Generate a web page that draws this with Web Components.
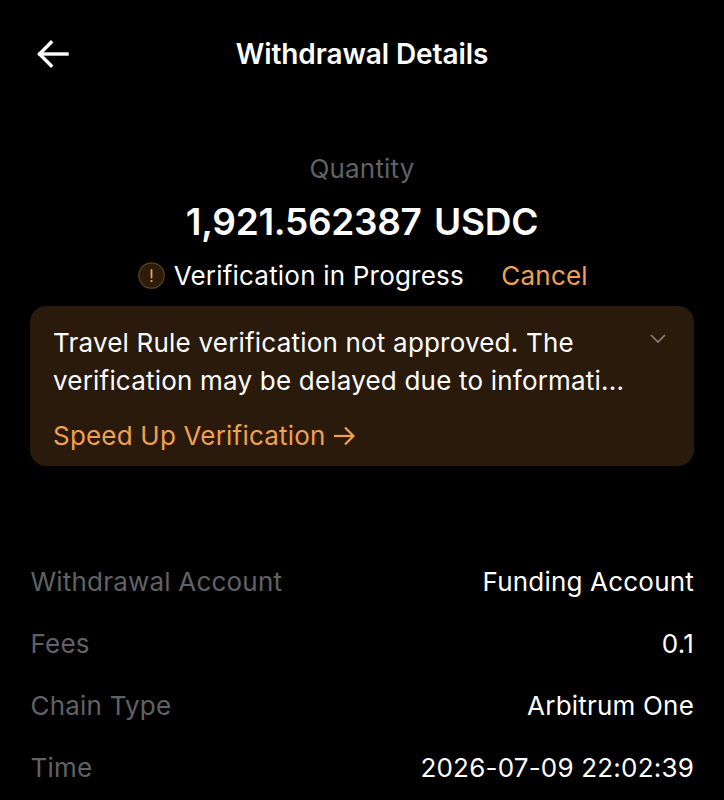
<!DOCTYPE html>
<html>
<head>
<meta charset="utf-8">
<style>
  html, body { margin: 0; padding: 0; background: #000; }
  body { width: 724px; height: 800px; overflow: hidden; font-family: Inter, "Liberation Sans", sans-serif; color: #fff; }
</style>
</head>
<body>
<withdrawal-page>
  <nav-bar title="Withdrawal Details"></nav-bar>
  <quantity-head label="Quantity" amount="1,921.562387 USDC" status="Verification in Progress" action="Cancel"></quantity-head>
  <notice-card link="Speed Up Verification">Travel Rule verification not approved. The<br>verification may be delayed due to informati...</notice-card>
  <detail-list>
    <detail-row label="Withdrawal Account" value="Funding Account"></detail-row>
    <detail-row label="Fees" value="0.1"></detail-row>
    <detail-row label="Chain Type" value="Arbitrum One"></detail-row>
    <detail-row label="Time" value="2026-07-09 22:02:39"></detail-row>
  </detail-list>
</withdrawal-page>

<script>
class WithdrawalPage extends HTMLElement {
  constructor() {
    super();
    this.attachShadow({ mode: "open" });
    this.shadowRoot.innerHTML = `
      <style>
        :host { display: flex; flex-direction: column; width: 724px; height: 800px; }
      </style>
      <slot></slot>`;
  }
}

class NavBar extends HTMLElement {
  constructor() {
    super();
    this.attachShadow({ mode: "open" });
    this.shadowRoot.innerHTML = `
      <style>
        :host { display: grid; grid-template-columns: 120px 1fr 120px; align-items: center; height: 38px; margin-top: 35px; }
        svg { display: block; margin-left: 36px; }
        h1 { margin: 0; font-size: 28px; font-weight: 600; line-height: 38px; text-align: center; letter-spacing: -0.1px; }
      </style>
      <svg width="34" height="30" viewBox="0 0 34 30" fill="none" stroke="#fff" stroke-width="3.4" stroke-linecap="square" stroke-linejoin="miter">
        <path d="M31 15H4"/><path d="M15 3.5 3.5 15 15 26.5"/>
      </svg>
      <h1></h1>`;
  }
  connectedCallback() {
    this.shadowRoot.querySelector('h1').textContent = this.getAttribute('title');
  }
}

class QuantityHead extends HTMLElement {
  constructor() {
    super();
    this.attachShadow({ mode: "open" });
    this.shadowRoot.innerHTML = `
      <style>
        :host { display: flex; flex-direction: column; align-items: center; margin-top: 77px; }
        .label { font-size: 26px; line-height: 38px; letter-spacing: 0.2px; color: #606266; }
        .amount { font-size: 37px; font-weight: 600; line-height: 44px; margin-top: 12px; letter-spacing: -0.3px; word-spacing: 3.4px; }
        .status { display: flex; align-items: center; margin-top: 11px; height: 40px; padding-left: 2px; font-size: 26px; letter-spacing: 0.2px; }
        .status svg { display: block; margin-right: 8.5px; }
        .cancel { color: #f0a050; margin-left: 37.5px; }
      </style>
      <div class="label"></div>
      <div class="amount"></div>
      <div class="status">
        <svg width="27" height="27" viewBox="0 0 27 27">
          <circle cx="13.5" cy="13.5" r="12.7" fill="#2e1c0b" stroke="#5e3f20" stroke-width="1.2"/>
          <path d="M13.5 8v7.5" stroke="#f0a050" stroke-width="1.8" stroke-linecap="round"/>
          <circle cx="13.5" cy="19" r="1.1" fill="#f0a050"/>
        </svg>
        <span class="text"></span>
        <span class="cancel"></span>
      </div>`;
  }
  connectedCallback() {
    const root = this.shadowRoot;
    root.querySelector('.label').textContent = this.getAttribute('label');
    root.querySelector('.amount').textContent = this.getAttribute('amount');
    root.querySelector('.text').textContent = this.getAttribute('status');
    root.querySelector('.cancel').textContent = this.getAttribute('action');
  }
}

class NoticeCard extends HTMLElement {
  constructor() {
    super();
    this.attachShadow({ mode: "open" });
    this.shadowRoot.innerHTML = `
      <style>
        :host { display: block; position: relative; box-sizing: border-box; margin: 11px 30px 0; height: 160px; padding: 18px 23px 0; background: #291a0b; border-radius: 16px; font-size: 26px; line-height: 37.5px; letter-spacing: 0.2px; color: #fff; }
        .chev { position: absolute; top: 27px; right: 27px; display: block; }
        .link { display: flex; align-items: center; margin-top: 18px; color: #f0a050; }
        .link svg { display: block; margin-left: 7px; }
      </style>
      <svg class="chev" width="18" height="12" viewBox="0 0 18 12" fill="none" stroke="#8a8178" stroke-width="1.6"><path d="M2 2l7 7 7-7"/></svg>
      <div><slot></slot></div>
      <div class="link"><span class="link-text"></span>
        <svg width="22" height="22" viewBox="0 0 22 22" fill="none" stroke="#f0a050" stroke-width="2.2"><path d="M1 11H20"/><path d="M12 2.5 20.5 11 12 19.5"/></svg>
      </div>`;
  }
  connectedCallback() {
    this.shadowRoot.querySelector('.link-text').textContent = this.getAttribute('link');
  }
}

class DetailList extends HTMLElement {
  constructor() {
    super();
    this.attachShadow({ mode: "open" });
    this.shadowRoot.innerHTML = `
      <style>
        :host { display: flex; flex-direction: column; gap: 24px; margin: 97px 30px 0 30.5px; }
      </style>
      <slot></slot>`;
  }
}

class DetailRow extends HTMLElement {
  constructor() {
    super();
    this.attachShadow({ mode: "open" });
    this.shadowRoot.innerHTML = `
      <style>
        :host { display: flex; justify-content: space-between; align-items: center; height: 38px; font-size: 26px; line-height: 38px; letter-spacing: 0.2px; }
        .label { color: #606266; }
        .value { color: #fff; }
      </style>
      <span class="label"></span>
      <span class="value"></span>`;
  }
  connectedCallback() {
    this.shadowRoot.querySelector('.label').textContent = this.getAttribute('label');
    this.shadowRoot.querySelector('.value').textContent = this.getAttribute('value');
  }
}

customElements.define('withdrawal-page', WithdrawalPage);
customElements.define('nav-bar', NavBar);
customElements.define('quantity-head', QuantityHead);
customElements.define('notice-card', NoticeCard);
customElements.define('detail-list', DetailList);
customElements.define('detail-row', DetailRow);
</script>
</body>
</html>
